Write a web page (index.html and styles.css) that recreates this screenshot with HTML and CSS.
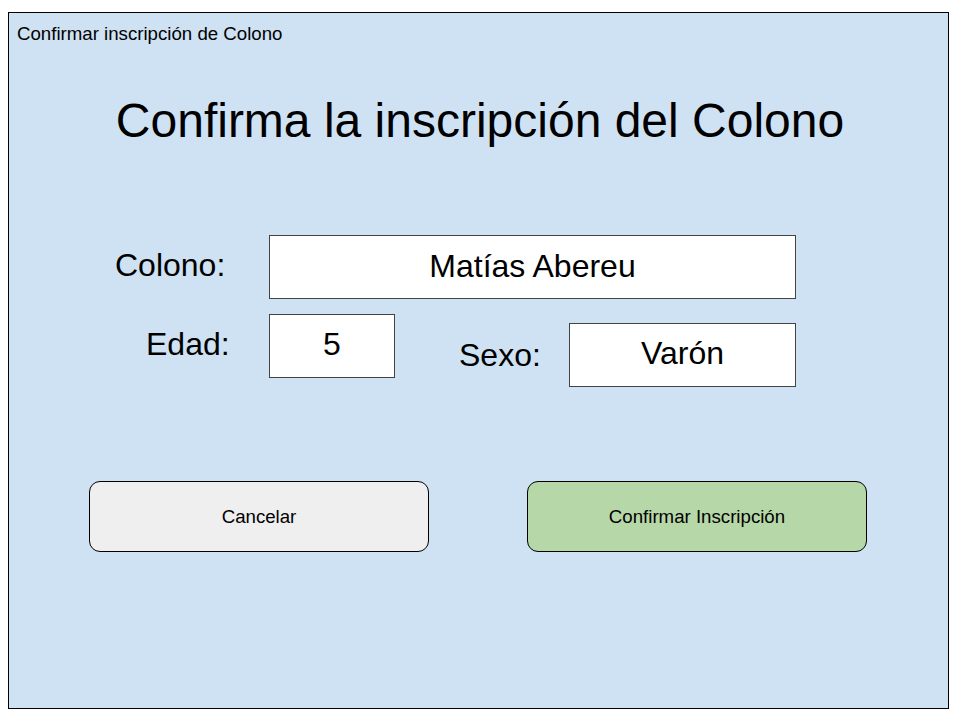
FILE: index.html
```html
<!DOCTYPE html>
<html lang="es">
<head>
<meta charset="utf-8">
<title>Confirmar inscripción de Colono</title>
<link rel="stylesheet" href="styles.css">
</head>
<body>
<div class="frame">
  <div class="caption">Confirmar inscripción de Colono</div>
  <h1 class="heading">Confirma la inscripción del Colono</h1>
  <div class="form">
    <div class="row">
      <div class="label label-colono">Colono:</div>
      <div class="field field-colono">Matías Abereu</div>
    </div>
    <div class="row row-second">
      <div class="label label-edad">Edad:</div>
      <div class="field field-edad">5</div>
      <div class="sexo">
        <div class="label label-sexo">Sexo:</div>
        <div class="field field-sexo">Varón</div>
      </div>
    </div>
  </div>
  <div class="actions">
    <button class="btn btn-cancel" type="button">Cancelar</button>
    <button class="btn btn-confirm" type="button">Confirmar Inscripción</button>
  </div>
</div>
</body>
</html>
```
FILE: styles.css
```css
html, body {
  margin: 0;
  padding: 0;
  background: #ffffff;
}

body {
  font-family: "Liberation Sans", Arial, sans-serif;
  color: #000000;
}

.frame {
  box-sizing: border-box;
  margin: 12px 0 0 8px;
  width: 941px;
  height: 697px;
  border: 1px solid #000000;
  background: #cfe2f3;
}

.caption {
  padding: 10px 0 0 8px;
  font-size: 18.67px;
  line-height: 21px;
}

.heading {
  margin: 49px 0 0 0;
  padding-left: 3px;
  font-weight: normal;
  font-size: 48px;
  line-height: 56px;
  text-align: center;
}

.form {
  margin-top: 86px;
  display: flex;
  flex-direction: column;
  gap: 15px;
}

.row {
  display: flex;
  align-items: flex-start;
}

.label {
  box-sizing: border-box;
  font-size: 32px;
  height: 64px;
  line-height: 60px;
}

.label-colono {
  width: 260px;
  padding-left: 106px;
}

.label-edad {
  width: 260px;
  padding-left: 137px;
}

.label-sexo {
  width: 110px;
  line-height: 64px;
}

.field {
  box-sizing: border-box;
  height: 64px;
  background: #ffffff;
  border: 1px solid #434343;
  font-size: 32px;
  line-height: 60px;
  text-align: center;
}

.field-colono {
  width: 527px;
}

.field-edad {
  width: 126px;
  line-height: 58px;
}

.sexo {
  display: flex;
  margin: 9px 0 0 64px;
}

.field-sexo {
  width: 227px;
  line-height: 58px;
}

.actions {
  display: flex;
  gap: 98px;
  margin: 94px 0 0 80px;
}

.btn {
  box-sizing: border-box;
  width: 340px;
  height: 71px;
  border: 1px solid #000000;
  border-radius: 11px;
  font-family: "Liberation Sans", Arial, sans-serif;
  font-size: 18.67px;
  color: #000000;
  padding: 0;
}

.btn-cancel {
  background: #efefef;
}

.btn-confirm {
  background: #b6d7a8;
}
```
